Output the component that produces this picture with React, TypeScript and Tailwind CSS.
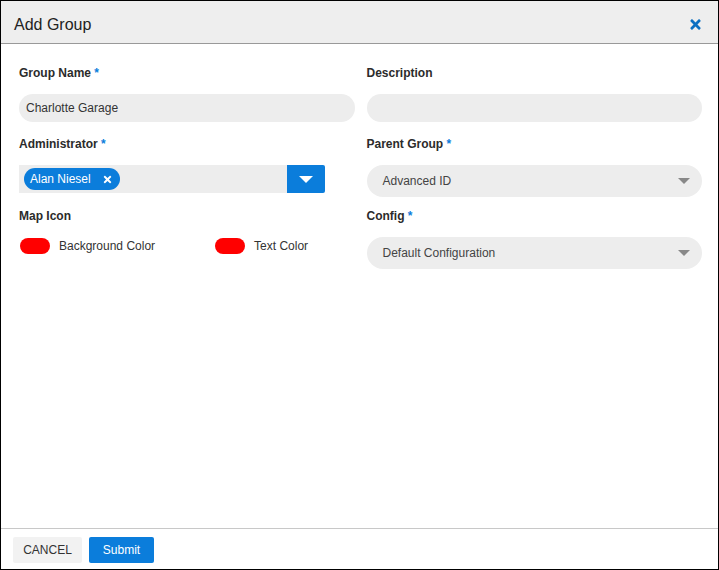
import { FaTimes } from 'react-icons/fa'

const FONT = { fontFamily: '"Liberation Sans", Arial, sans-serif' }

function Label({ text, required }: { text: string; required?: boolean }) {
  return (
    <div className="h-[14px] text-[12px] leading-[14px] font-bold text-[#2b2b2b]">
      {text}
      {required && <span className="text-[#0b7ddb]"> *</span>}
    </div>
  )
}

function Caret({ className }: { className?: string }) {
  return (
    <svg width="12" height="6" viewBox="0 0 12 6" className={className}>
      <path d="M0 0 L12 0 L6 6 Z" fill="currentColor" />
    </svg>
  )
}

function Select({ value }: { value: string }) {
  return (
    <div className="flex items-center justify-between h-8 rounded-full bg-[#ededed] pl-4 pr-[12px] text-[12px] text-[#444]">
      <span>{value}</span>
      <Caret className="text-[#888]" />
    </div>
  )
}

function Swatch({ label }: { label: string }) {
  return (
    <div className="flex items-center gap-[9px]">
      <div className="w-[30px] h-[16px] rounded-full bg-[#ff0000]" />
      <span className="text-[12px] text-[#333]">{label}</span>
    </div>
  )
}

export default function App() {
  return (
    <div className="w-[719px] h-[570px] flex flex-col border border-black bg-white" style={FONT}>
      {/* Header */}
      <div className="flex items-center justify-between h-[43px] shrink-0 bg-[#eeeeee] border-b border-[#999] pl-[13px] pr-[15px] pt-[5px]">
        <span className="text-[16px] text-[#222]">Add Group</span>
        <FaTimes className="text-[#0b6fc2] text-[15px]" />
      </div>

      {/* Body */}
      <div className="flex-1 grid grid-cols-2 gap-x-3 pl-[18px] pr-4 pt-[22px]">
        <div className="flex flex-col">
          <Label text="Group Name" required />
          <div className="mt-[14px] h-7 rounded-full bg-[#ededed] flex items-center px-[7px] text-[12px] text-[#333]">
            Charlotte Garage
          </div>
          <div className="mt-[15px]">
            <Label text="Administrator" required />
          </div>
          <div className="mt-[14px] flex h-7 w-[306px]">
            <div className="flex-1 bg-[#ededed] flex items-center pl-[5px]">
              <div className="flex items-center gap-[11px] h-[22px] rounded-full bg-[#0b7ddb] pl-[6px] pr-[7px] text-[12px] text-white">
                <span>Alan Niesel</span>
                <FaTimes className="text-[11px]" />
              </div>
            </div>
            <div className="w-[38px] bg-[#0b7ddb] flex items-center justify-center rounded-r-[2px]">
              <svg width="14" height="7" viewBox="0 0 14 7">
                <path d="M0 0 L14 0 L7 7 Z" fill="#fff" />
              </svg>
            </div>
          </div>
          <div className="mt-[16px]">
            <Label text="Map Icon" />
          </div>
          <div className="mt-[14px] flex items-center gap-[45px] pl-[1px]">
            <Swatch label="Background Color" />
            <div className="ml-[15px]">
              <Swatch label="Text Color" />
            </div>
          </div>
        </div>

        <div className="flex flex-col">
          <Label text="Description" />
          <div className="mt-[14px] h-7 rounded-full bg-[#ededed]" />
          <div className="mt-[15px]">
            <Label text="Parent Group" required />
          </div>
          <div className="mt-[14px]">
            <Select value="Advanced ID" />
          </div>
          <div className="mt-[12px]">
            <Label text="Config" required />
          </div>
          <div className="mt-[14px]">
            <Select value="Default Configuration" />
          </div>
        </div>
      </div>

      {/* Footer */}
      <div className="h-[41px] shrink-0 border-t border-[#c8c8c8] flex items-start gap-[7px] pt-[8px] pl-3">
        <button className="h-[26px] w-[69px] rounded-[2px] bg-[#f2f2f2] text-[12px] text-[#333]">CANCEL</button>
        <button className="h-[26px] w-[65px] rounded-[2px] bg-[#0b7ddb] text-[12px] text-white">Submit</button>
      </div>
    </div>
  )
}
